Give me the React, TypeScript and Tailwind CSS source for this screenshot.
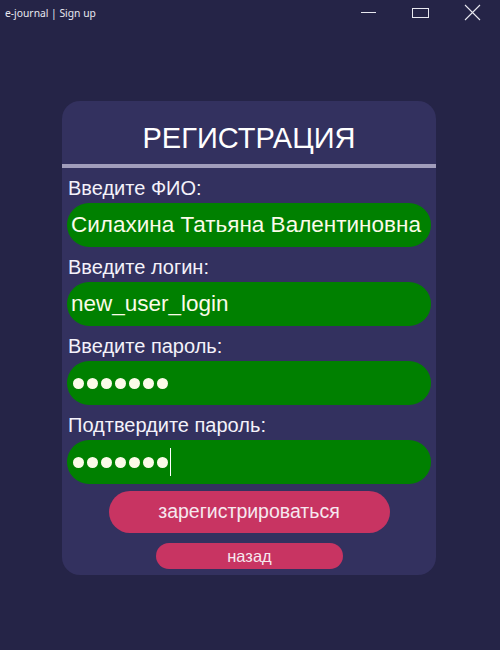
import React from "react";

function Dots({ n }: { n: number }) {
  return (
    <div className="flex items-center gap-[3px]">
      {Array.from({ length: n }).map((_, i) => (
        <span key={i} className="block w-[11px] h-[11px] rounded-full bg-[#fbfbe8]" />
      ))}
    </div>
  );
}

function Label({ children }: { children: React.ReactNode }) {
  return (
    <div className="pt-[9px] pb-[4px] h-[35px]">
      <div className="h-[22px] leading-[22px] text-[20px] text-[#f4f2fa] pl-[1px]">{children}</div>
    </div>
  );
}

export default function App() {
  return (
    <div
      className="w-[500px] h-[650px] bg-[#252447] flex flex-col"
      style={{ fontFamily: '"Liberation Sans", Arial, sans-serif' }}
    >
      <div className="h-[28px] flex items-start relative">
        <div
          className="text-[10.3px] leading-[13px] text-[#e8e8f0] pl-[5px] pt-[7px]"
          style={{ fontFamily: '"Noto Sans", "Open Sans", sans-serif' }}
        >
          e-journal | Sign up
        </div>
        <div className="absolute left-[361px] top-[12px] w-[15px] h-[1px] bg-[#e8e8f0]" />
        <div className="absolute left-[412px] top-[8px] w-[17px] h-[10px] border border-[#e8e8f0]" />
        <svg className="absolute left-[464px] top-[4px]" width="17" height="17" viewBox="0 0 17 17">
          <path d="M1 1 L16 16 M16 1 L1 16" stroke="#e8e8f0" strokeWidth="1.1" fill="none" />
        </svg>
      </div>
      <div className="ml-[62px] mt-[73px] w-[374px] h-[474px] rounded-[18px] bg-[#33315f] flex flex-col">
        <div className="pt-[21px] pb-[9px] h-[63px] text-center text-[29px] leading-[33px] text-white">
          РЕГИСТРАЦИЯ
        </div>
        <div className="h-[4px] bg-[#a19dbb]" />
        <div className="px-[5px] flex flex-col">
          <Label>Введите ФИО:</Label>
          <div className="h-[44px] rounded-full bg-[#008000] flex items-center pl-[4px] text-[22.5px] text-[#fbfbe8] whitespace-nowrap overflow-hidden">
            Силахина Татьяна Валентиновна
          </div>
          <Label>Введите логин:</Label>
          <div className="h-[44px] rounded-full bg-[#008000] flex items-center pl-[4px] text-[22.5px] text-[#fbfbe8]">
            new_user_login
          </div>
          <Label>Введите пароль:</Label>
          <div className="h-[44px] rounded-full bg-[#008000] flex items-center pl-[6px]">
            <Dots n={7} />
          </div>
          <Label>Подтвердите пароль:</Label>
          <div className="h-[44px] rounded-full bg-[#008000] flex items-center pl-[6px]">
            <Dots n={7} />
            <span className="ml-[2px] block w-[1px] h-[28px] bg-white" />
          </div>
        </div>
        <div className="flex justify-center mt-[7px]">
          <div className="w-[281px] h-[42px] rounded-full bg-[#c83462] flex items-center justify-center text-[19.5px] text-[#f6e8ef]">
            зарегистрироваться
          </div>
        </div>
        <div className="flex justify-center mt-[10px]">
          <div className="w-[187px] h-[26px] rounded-full bg-[#c83462] flex items-center justify-center text-[16.5px] text-[#f6e8ef] ml-[1px]">
            назад
          </div>
        </div>
      </div>
    </div>
  );
}
